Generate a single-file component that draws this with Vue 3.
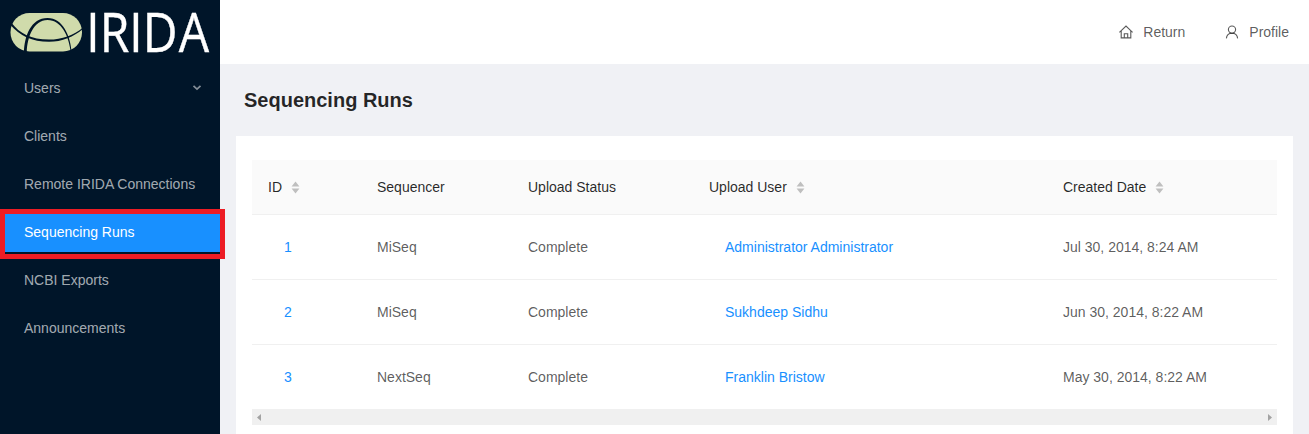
<script setup>
const menu = ['Users', 'Clients', 'Remote IRIDA Connections', 'Sequencing Runs', 'NCBI Exports', 'Announcements']
const columns = [
  { title: 'ID', sort: true },
  { title: 'Sequencer' },
  { title: 'Upload Status' },
  { title: 'Upload User', sort: true },
  { title: 'Created Date', sort: true },
]
const runs = [
  { id: 1, sequencer: 'MiSeq', status: 'Complete', user: 'Administrator Administrator', date: 'Jul 30, 2014, 8:24 AM' },
  { id: 2, sequencer: 'MiSeq', status: 'Complete', user: 'Sukhdeep Sidhu', date: 'Jun 30, 2014, 8:22 AM' },
  { id: 3, sequencer: 'NextSeq', status: 'Complete', user: 'Franklin Bristow', date: 'May 30, 2014, 8:22 AM' },
]
</script>

<template>
  <div class="layout">
    <aside class="sider">
      <svg class="logo" width="220" height="64" viewBox="0 0 220 64">
        <rect x="10.5" y="13" width="71.5" height="38.5" rx="19" fill="#d0dbab" />
        <g fill="#001529">
          <path d="M11 22.2 C20 34 31 39.3 49 39.6 C62 39.6 74 35 82.5 28 L82.5 29.2 C74 36.5 62 41.8 49 41.8 C32 41.8 20 36 10 24.5 Z" />
          <path d="M24 52 C24.4 36 31 18 47.5 18 C63 18 70 36 71.4 50 L70.4 50 C68.5 36 61.5 20 47.5 20 C33.5 20 27.3 37 26.8 52 Z" />
        </g>
        <text class="brand" x="0" y="0" dx="0 0 0 0 1.2" transform="translate(86.3 51.5) scale(0.889 1)">IRIDA</text>
      </svg>
      <nav class="menu">
        <a v-for="item in menu" :key="item" class="item" :class="{ selected: item === 'Sequencing Runs' }">
          <span>{{ item }}</span>
          <svg v-if="item === 'Users'" class="chevron" width="10" height="10" viewBox="0 0 10 10">
            <path d="M1.5 2.8 L5 6.1 L8.5 2.8" fill="none" stroke="currentColor" stroke-width="1.7" />
          </svg>
        </a>
      </nav>
      <div class="highlight"></div>
    </aside>
    <div class="main">
      <header class="topbar">
        <a class="action">
          <svg width="14" height="14" viewBox="0 0 14 14" fill="none" stroke="currentColor" stroke-width="1.1">
            <path d="M.4 7.3 L7 1 L13.6 7.3 M2.2 6.1 V12.9 H11.8 V6.1 M5.3 12.9 V8.8 H8.7 V12.9" />
          </svg>
          <span>Return</span>
        </a>
        <a class="action">
          <svg width="14" height="14" viewBox="0 0 14 14" fill="none" stroke="currentColor" stroke-width="1.1">
            <circle cx="7" cy="4.6" r="3.6" />
            <path d="M1.4 13.4 C1.6 10.2 4 8.2 7 8.2 S12.4 10.2 12.6 13.4" />
          </svg>
          <span>Profile</span>
        </a>
      </header>
      <h1 class="title">Sequencing Runs</h1>
      <section class="card">
        <div class="row head">
          <div v-for="c in columns" :key="c.title" class="cell">
            {{ c.title }}
            <svg v-if="c.sort" class="sorter" width="9" height="13" viewBox="0 0 9 13" fill="#bfbfbf">
              <path d="M4.5 .6 L8.4 5.4 H.6 Z M.6 7.6 H8.4 L4.5 12.4 Z" />
            </svg>
          </div>
        </div>
        <div v-for="r in runs" :key="r.id" class="row">
          <div class="cell"><a class="link">{{ r.id }}</a></div>
          <div class="cell">{{ r.sequencer }}</div>
          <div class="cell">{{ r.status }}</div>
          <div class="cell"><a class="link">{{ r.user }}</a></div>
          <div class="cell">{{ r.date }}</div>
        </div>
        <div class="scrollbar">
          <svg width="4" height="7" viewBox="0 0 4 7"><path d="M4 0 V7 L0 3.5 Z" fill="#a3a3a3" /></svg>
          <svg width="4" height="7" viewBox="0 0 4 7"><path d="M0 0 V7 L4 3.5 Z" fill="#a3a3a3" /></svg>
        </div>
      </section>
    </div>
  </div>
</template>

<style>
body { margin: 0; overflow: hidden; }
</style>

<style scoped>
.layout {
  display: flex;
  height: 434px;
  overflow: hidden;
  background: #f0f1f5;
  color: rgba(0, 0, 0, 0.65);
  font: 14px/22px "Liberation Sans", Arial, sans-serif;
}
.sider { position: relative; width: 220px; flex: none; background: #001529; }
.logo { display: block; overflow: visible; }
.brand { font-family: "Open Sans", sans-serif; font-size: 54px; fill: #fff; stroke: #fff; stroke-width: 0.4px; }
.menu { display: flex; flex-direction: column; gap: 8px; padding-top: 4px; }
.item {
  display: flex;
  align-items: center;
  justify-content: space-between;
  height: 40px;
  padding: 0 18px 0 24px;
  color: rgba(255, 255, 255, 0.65);
}
.item.selected { background: #1890ff; color: #fff; }
.chevron { opacity: 0.8; }
.highlight {
  position: absolute;
  left: 0;
  top: 209px;
  width: 225px;
  height: 50px;
  box-sizing: border-box;
  border: 5px solid #ed1c24;
  z-index: 1;
}
.main { flex: 1; min-width: 0; }
.topbar {
  display: flex;
  justify-content: flex-end;
  align-items: center;
  gap: 40px;
  height: 64px;
  padding-right: 20px;
  background: #fff;
}
.action { display: flex; align-items: center; gap: 10px; }
.title {
  margin: 20px 24px;
  color: rgba(0, 0, 0, 0.85);
  font-size: 20px;
  line-height: 32px;
  font-weight: 700;
}
.card { margin: 0 16px; padding: 24px 16px; background: #fff; }
.row {
  display: grid;
  grid-template-columns: 109px 151px 181px 354px 230px;
  align-items: center;
  height: 64px;
  border-bottom: 1px solid #f0f0f0;
}
.row.head { height: 54px; background: #fafafa; color: rgba(0, 0, 0, 0.85); }
.row:nth-child(4) { border-bottom: 0; }
.cell { display: flex; align-items: center; padding: 0 16px; white-space: nowrap; }
.sorter { margin: 1px 0 0 9px; }
.link { padding: 0 16px; color: #1890ff; }
.scrollbar {
  display: flex;
  align-items: center;
  justify-content: space-between;
  height: 16px;
  padding: 0 5px;
  background: #f0f0f0;
}
</style>
